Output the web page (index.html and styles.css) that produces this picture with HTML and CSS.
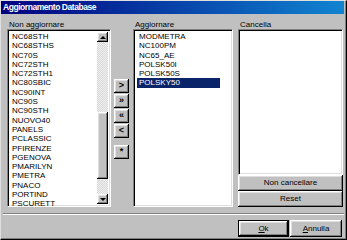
FILE: index.html
```html
<!DOCTYPE html>
<html>
<head>
<meta charset="utf-8">
<link rel="stylesheet" href="styles.css">
</head>
<body>
<div class="window">
  <div class="titlebar">Aggiornamento Database</div>
  <div class="body">
    <div class="col col-left">
      <div class="label">Non aggiornare</div>
      <div class="listbox sunken">
        <ul class="items">
          <li>NC68STH</li><li>NC68STHS</li><li>NC70S</li><li>NC72STH</li><li>NC72STH1</li>
          <li>NC80SBIC</li><li>NC90INT</li><li>NC90S</li><li>NC90STH</li><li>NUOVO40</li>
          <li>PANELS</li><li>PCLASSIC</li><li>PFIRENZE</li><li>PGENOVA</li><li>PMARILYN</li>
          <li>PMETRA</li><li>PNACO</li><li>PORTIND</li><li>PSCURETT</li>
        </ul>
        <div class="scrollbar">
          <div class="sb-btn raised"><span class="tri-up"></span></div>
          <div class="sb-track">
            <div class="sb-thumb raised"></div>
          </div>
          <div class="sb-btn raised"><span class="tri-down"></span></div>
        </div>
      </div>
    </div>
    <div class="col-buttons">
      <div class="mv-btn raised">&gt;</div>
      <div class="mv-btn raised">&raquo;</div>
      <div class="mv-btn raised">&laquo;</div>
      <div class="mv-btn raised">&lt;</div>
      <div class="mv-btn raised mv-star">*</div>
    </div>
    <div class="col col-mid">
      <div class="label">Aggiornare</div>
      <div class="listbox sunken">
        <ul class="items items-mid">
          <li>MODMETRA</li><li>NC100PM</li><li>NC65_AE</li><li>POLSK50I</li><li>POLSK50S</li>
          <li class="selected">POLSKY50</li>
        </ul>
      </div>
    </div>
    <div class="col col-right">
      <div class="label">Cancella</div>
      <div class="listbox sunken"></div>
      <div class="wide-btn raised">Non cancellare</div>
      <div class="wide-btn raised">Reset</div>
    </div>
  </div>
  <div class="separator"></div>
  <div class="footer">
    <div class="btn-default"><div class="btn raised"><span class="u">O</span>k</div></div>
    <div class="btn btn-cancel raised"><span class="u">A</span>nnulla</div>
  </div>
</div>
</body>
</html>
```

FILE: styles.css
```css
* { box-sizing: border-box; }
html, body { margin: 0; padding: 0; }
body {
  width: 347px;
  height: 240px;
  overflow: hidden;
  font-family: "Liberation Sans", Arial, sans-serif;
  font-size: 8px;
  color: #000;
  background: #c0c0c0;
}
.window {
  width: 347px;
  height: 240px;
  background: #c0c0c0;
  border: 1px solid;
  border-color: #dfdfdf #000 #000 #dfdfdf;
  box-shadow: inset -1px -1px #808080;
  display: flex;
  flex-direction: column;
}
.titlebar {
  height: 13px;
  margin-right: 2px;
  background: linear-gradient(to right, #000080, #1084d0);
  color: #fff;
  font-weight: bold;
  font-size: 8.5px;
  letter-spacing: -0.45px;
  line-height: 13px;
  padding-left: 2px;
}
.raised {
  background: #c0c0c0;
  box-shadow: inset -1px -1px #000, inset 1px 1px #fff, inset -2px -2px #808080, inset 2px 2px #dfdfdf;
}
.sunken {
  border: 1px solid;
  border-color: #808080 #fff #fff #808080;
  box-shadow: inset 1px 1px #000, inset -1px -1px #dfdfdf;
  background: #fff;
}
.body {
  display: flex;
  padding-left: 6px;
  height: 193px;
}
.col {
  display: flex;
  flex-direction: column;
}
.label {
  height: 15px;
  line-height: 8px;
  padding-top: 7px;
  padding-left: 2px;
  white-space: nowrap;
}
.col-left { width: 104px; }
.col-mid { width: 100px; margin-left: 4px; }
.col-right { width: 105px; margin-left: 5px; }
.listbox {
  height: 178px;
  display: flex;
  padding: 2px;
}
.col-right .listbox { height: 146px; }
.items {
  list-style: none;
  margin: 0;
  padding: 0;
  flex: 1;
}
.items li {
  height: 9.3px;
  line-height: 9.3px;
  padding-left: 2px;
  white-space: nowrap;
}
.items-mid { flex: none; width: 84px; margin-left: 0; }
.items-mid li { padding-left: 2px; margin-left: 1px; }
.items li.selected {
  background: #0a246a;
  color: #fff;
}
.scrollbar {
  width: 11px;
  display: flex;
  flex-direction: column;
}
.sb-btn {
  height: 10px;
  display: flex;
  align-items: center;
  justify-content: center;
}
.tri-up, .tri-down {
  width: 0; height: 0;
  border-left: 3px solid transparent;
  border-right: 3px solid transparent;
}
.tri-up { border-bottom: 3px solid #000; }
.tri-down { border-top: 3px solid #000; }
.sb-track {
  flex: 1;
  background-color: #e4e4e4;
  background-image: repeating-conic-gradient(#f0f0f0 0 25%, #d8d8d8 0 50%);
  background-size: 2px 2px;
  padding-top: 70px;
}
.sb-thumb { height: 67px; }
.col-buttons {
  width: 15px;
  margin-left: 3px;
  padding-top: 65px;
  display: flex;
  flex-direction: column;
}
.mv-btn {
  height: 14px;
  margin-bottom: 1px;
  font-size: 9px;
  font-weight: bold;
  line-height: 13px;
  text-align: center;
}
.mv-star { margin-top: 6px; }
.wide-btn {
  height: 16px;
  line-height: 16px;
  text-align: center;
}
.separator {
  margin: 6px 2px 0 2px;
  height: 2px;
  border-top: 1px solid #808080;
  border-bottom: 1px solid #fff;
}
.footer {
  display: flex;
  justify-content: flex-end;
  padding-right: 4px;
  margin-top: 5px;
  gap: 1px;
}
.btn-default {
  border: 1px solid #000;
  width: 51px;
  height: 17px;
}
.btn-default .btn { width: 49px; height: 15px; line-height: 15px; }
.btn {
  text-align: center;
  height: 17px;
  line-height: 17px;
}
.btn-cancel { width: 52px; }
.u { text-decoration: underline; }
```
